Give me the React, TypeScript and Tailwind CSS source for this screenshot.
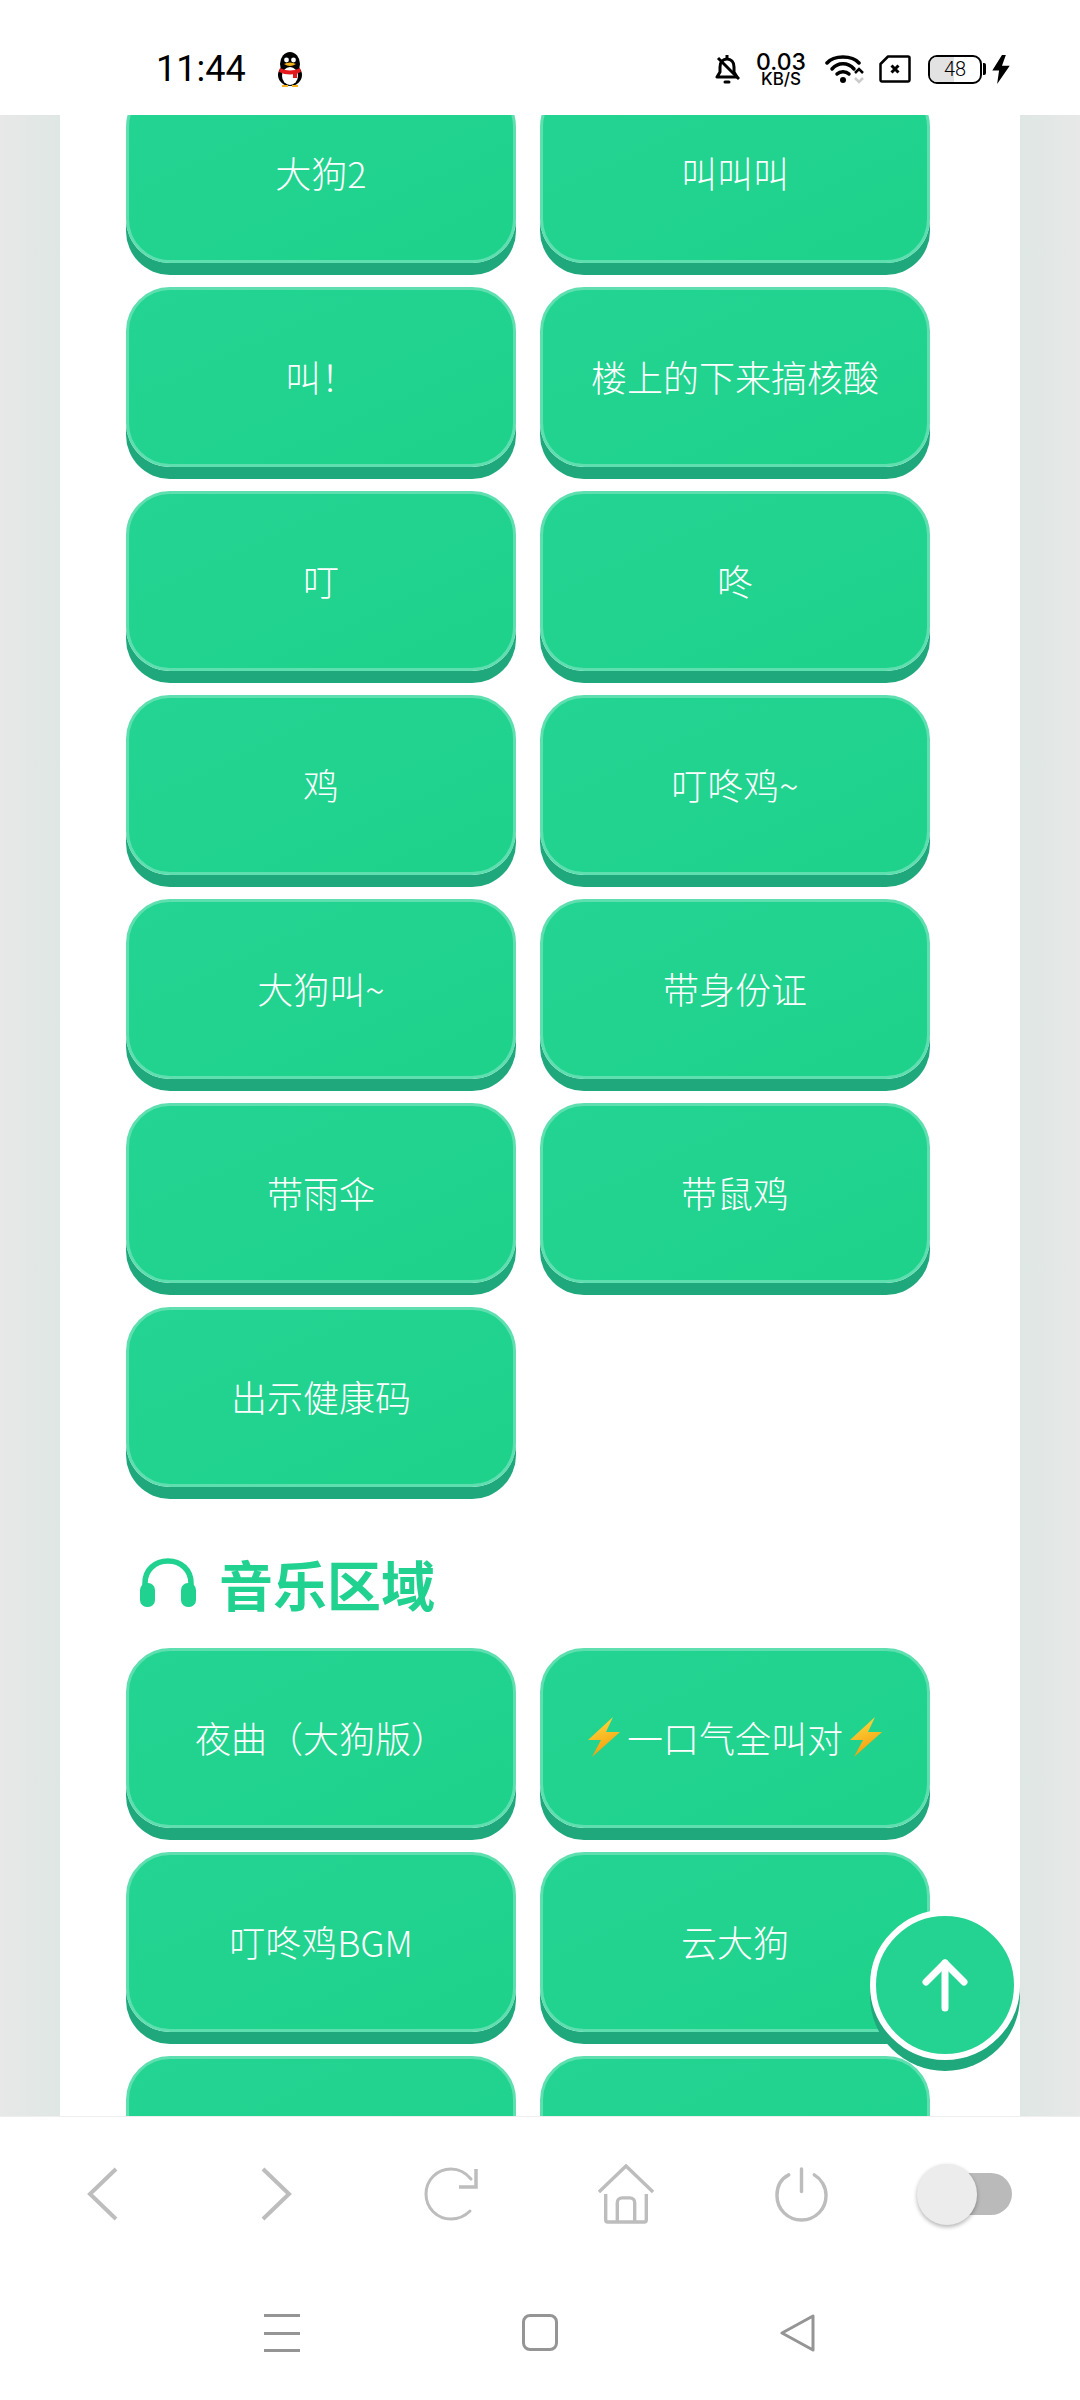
const font = { fontFamily: '"Noto Sans CJK SC", sans-serif' };

const groupOne = [
  "大狗2",
  "叫叫叫",
  "叫！",
  "楼上的下来搞核酸",
  "叮",
  "咚",
  "鸡",
  "叮咚鸡~",
  "大狗叫~",
  "带身份证",
  "带雨伞",
  "带鼠鸡",
  "出示健康码",
];

function Bolt({ id }: { id: string }) {
  return (
    <span className="w-[45px] flex justify-center">
      <svg viewBox="0 0 32 40" className="w-[32px] h-[40px]">
        <defs>
          <linearGradient id={id} x1="0" y1="0" x2="0.3" y2="1">
            <stop offset="0" stopColor="#fde047" />
            <stop offset="1" stopColor="#f59e0b" />
          </linearGradient>
        </defs>
        <path d="M25 0 L0 23 L13 23 L4 40 L32 15 L18 15 Z" fill={`url(#${id})`} />
      </svg>
    </span>
  );
}

function SoundButton({ children }: { children?: React.ReactNode }) {
  return (
    <button className="h-[180px] pb-[3px] rounded-[44px] border-[3px] border-[#5fdfb0] bg-gradient-to-br from-[#23d492] to-[#1ed28b] text-white text-[36px] font-light shadow-[0_12px_0_#1fa87c] flex items-center justify-center">
      {children}
    </button>
  );
}

function StatusBar() {
  return (
    <div className="h-[115px] bg-white flex items-center pt-[23px] pl-[156px] pr-[69px] justify-between shrink-0">
      <div className="flex items-center gap-[29px]">
        <span className="text-[36px] text-black font-['Roboto']">11:44</span>
        <svg viewBox="0 0 30 36" className="w-[30px] h-[36px]">
          <ellipse cx="15" cy="13" rx="10" ry="12" fill="#000" />
          <ellipse cx="15" cy="24" rx="12" ry="11" fill="#000" />
          <ellipse cx="15" cy="25" rx="8" ry="9" fill="#fff" />
          <path d="M5 17 Q15 22 25 17 L26 21 Q15 26 4 21 Z" fill="#e3191c" />
          <path d="M18 21 h4 v6 h-4 Z" fill="#e3191c" />
          <circle cx="11.5" cy="9" r="2.4" fill="#fff" />
          <circle cx="18.5" cy="9" r="2.4" fill="#fff" />
          <path d="M9 13 Q15 10 21 13 Q15 17 9 13 Z" fill="#f5b21b" />
          <path d="M7 34 h6 v2 h-6 Z M17 34 h6 v2 h-6 Z" fill="#f5b21b" />
        </svg>
      </div>
      <div className="flex items-center">
        <svg viewBox="0 0 25 29" className="w-[25px] h-[29px]" fill="none" stroke="#000" strokeWidth="3">
          <path d="M2 22 H22 L19 17 V12 C19 7 16 4 12 4 C8 4 5 7 5 12 V17 Z" strokeLinejoin="round" />
          <path d="M12 0 V3" />
          <path d="M3 3 L24 24" />
          <path d="M10 27 h4" strokeLinecap="round" />
        </svg>
        <div className="ml-[16px] flex flex-col items-center w-[50px] text-black font-['Inter']">
          <span className="text-[23px] h-[20px] leading-[20px] font-medium">0.03</span>
          <span className="text-[17px] h-[15px] leading-[15px] font-medium">KB/S</span>
        </div>
        <svg viewBox="0 0 40 30" className="ml-[19px] w-[40px] h-[30px]" fill="none">
          <path d="M2 9 C9 1 27 1 34 9" stroke="#000" strokeWidth="3.5" strokeLinecap="round" />
          <path d="M7 15 C13 8 23 8 29 15" stroke="#000" strokeWidth="3.5" strokeLinecap="round" />
          <path d="M12 20 C15 17 21 17 24 20" stroke="#000" strokeWidth="3.5" strokeLinecap="round" />
          <circle cx="18" cy="26" r="3" fill="#000" />
          <path d="M30 19 l4 -4 l4 4" stroke="#000" strokeWidth="2.5" />
          <path d="M30 24 l4 4 l4 -4" stroke="#ccc" strokeWidth="2.5" />
        </svg>
        <svg viewBox="0 0 32 28" className="ml-[14px] w-[32px] h-[28px]" fill="none" stroke="#000" strokeWidth="2.5">
          <path d="M9 1.5 H29 a1.5 1.5 0 0 1 1.5 1.5 V25 a1.5 1.5 0 0 1 -1.5 1.5 H3 a1.5 1.5 0 0 1 -1.5 -1.5 V9 Z" strokeLinejoin="round" />
          <path d="M12.5 10.5 L19.5 17.5 M19.5 10.5 L12.5 17.5" strokeWidth="3" />
        </svg>
        <div className="ml-[17px] relative w-[54px] h-[29px] rounded-[9px] border-[2.5px] border-black overflow-hidden flex items-center justify-center">
          <div className="absolute left-0 top-0 bottom-0 w-[48%] bg-[#e2e2e2]" />
          <span className="relative text-[20px] leading-none font-['Roboto'] font-light text-black">48</span>
        </div>
        <div className="ml-[1px] w-[3px] h-[12px] bg-black rounded-r-[2px]" />
        <svg viewBox="0 0 20 32" className="ml-[5px] w-[20px] h-[31px]">
          <path d="M11 1 L1 17 H8 L6 31 L19 12 H11 L15 1 Z" fill="#000" />
        </svg>
      </div>
    </div>
  );
}

function BrowserBar() {
  const stroke = "#bdbdbd";
  return (
    <div className="h-[162px] flex items-center pb-[8px] pl-[87px] shrink-0">
      <svg viewBox="0 0 31 54" className="w-[31px] h-[54px]" fill="none" stroke={stroke} strokeWidth="4">
        <path d="M29 2 L3 27 L29 52" />
      </svg>
      <svg viewBox="0 0 31 54" className="ml-[143px] w-[31px] h-[54px]" fill="none" stroke={stroke} strokeWidth="4">
        <path d="M2 2 L28 27 L2 52" />
      </svg>
      <svg viewBox="0 0 54 54" className="ml-[132px] w-[54px] h-[54px]" fill="none" stroke={stroke} strokeWidth="3">
        <path d="M47 12 C42 6 35 2 27 2 C13 2 2 13 2 27 C2 41 13 52 27 52 C34 52 41 49 46 44" strokeLinecap="round" />
        <path d="M52 2 V20 H35" strokeWidth="3.5" />
      </svg>
      <svg viewBox="0 0 60 62" className="ml-[119px] w-[58px] h-[60px]" fill="none" stroke={stroke} strokeWidth="3.5">
        <path d="M2 29 L30 2 L58 29" />
        <path d="M9 31 V58 a2 2 0 0 0 2 2 H49 a2 2 0 0 0 2 -2 V31" />
        <path d="M21 60 V40 a5 5 0 0 1 5 -5 H34 a5 5 0 0 1 5 5 V60" />
      </svg>
      <svg viewBox="0 0 54 56" className="ml-[120px] w-[53px] h-[55px]" fill="none" stroke={stroke} strokeWidth="3.5" strokeLinecap="round">
        <path d="M27 2 V25" />
        <path d="M14 8 C6 12 2 20 2 29 C2 43 13 54 27 54 C41 54 52 43 52 29 C52 20 47 12 40 8" />
      </svg>
      <div className="ml-[89px] relative w-[95px] h-[61px] flex items-center">
        <div className="ml-[17px] w-[78px] h-[42px] rounded-full bg-[#bababa]" />
        <div className="absolute left-0 top-0 w-[60px] h-[61px] rounded-full bg-[#ececec] shadow-[0_2px_4px_rgba(0,0,0,0.3)]" />
      </div>
    </div>
  );
}

function NavBar() {
  return (
    <div className="h-[121px] flex items-start bg-white pt-[35px] pl-[264px] shrink-0">
      <div className="w-[36px] h-[38px] flex flex-col justify-between">
        <div className="h-[3px] bg-[#959595]" />
        <div className="h-[3px] bg-[#959595]" />
        <div className="h-[3px] bg-[#959595]" />
      </div>
      <div className="ml-[222px] w-[36px] h-[37px] rounded-[8px] border-[3px] border-[#959595]" />
      <svg viewBox="0 0 36 38" className="ml-[222px] w-[36px] h-[38px]" fill="none" stroke="#959595" strokeWidth="3" strokeLinejoin="round">
        <path d="M2 19 L33 2 V36 Z" />
      </svg>
    </div>
  );
}

export default function App() {
  return (
    <div className="w-[1080px] h-[2400px] flex flex-col bg-white overflow-hidden relative" style={font}>
      <StatusBar />
      <div className="h-[2002px] flex overflow-hidden shrink-0 border-b border-[#eeeeee]">
        <div className="w-[60px] bg-gradient-to-r from-[#e7e8e7] to-[#dfe7e4]" />
        <div className="flex-1 bg-white pl-[66px] pr-[90px]">
          <div className="-mt-[32px] grid grid-cols-2 gap-x-[24px] gap-y-[24px]">
            {groupOne.map((label) => (
              <SoundButton key={label}>{label}</SoundButton>
            ))}
          </div>
          <div className="mt-[51px] h-[90px] flex items-center pl-[13px] gap-[22px] text-[#20d18f] text-[54px] font-bold">
            <svg viewBox="0 0 58 50" className="w-[58px] h-[50px]">
              <path d="M6 30 V25 C6 12 16 3 29 3 C42 3 52 12 52 25 V30" fill="none" stroke="#20d18f" strokeWidth="5.5" />
              <rect x="1" y="25" width="15" height="24" rx="7" fill="#20d18f" />
              <rect x="42" y="25" width="15" height="24" rx="7" fill="#20d18f" />
            </svg>
            <span>音乐区域</span>
          </div>
          <div className="mt-[20px] grid grid-cols-2 gap-x-[24px] gap-y-[24px]">
            <SoundButton>夜曲（大狗版）</SoundButton>
            <SoundButton>
              <Bolt id="bolt-a" />
              一口气全叫对
              <Bolt id="bolt-b" />
            </SoundButton>
            <SoundButton>叮咚鸡BGM</SoundButton>
            <SoundButton>云大狗</SoundButton>
            <SoundButton />
            <SoundButton />
          </div>
        </div>
        <div className="w-[60px] bg-gradient-to-l from-[#e7e8e7] to-[#dfe7e4]" />
      </div>
      <BrowserBar />
      <NavBar />
      <button className="absolute left-[870px] top-[1910px] w-[150px] h-[150px] rounded-full border-[6px] border-white bg-[#24d392] shadow-[0_11px_0_#1fa87c] flex items-center justify-center">
        <svg viewBox="0 0 46 54" className="w-[46px] h-[54px]" fill="none" stroke="#fff" strokeWidth="7" strokeLinecap="round" strokeLinejoin="round">
          <path d="M23 50 V5" />
          <path d="M4 24 L23 5 L42 24" />
        </svg>
      </button>
    </div>
  );
}
